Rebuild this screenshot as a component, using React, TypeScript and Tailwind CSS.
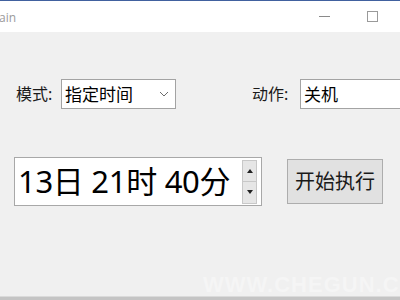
import React from "react";

const cjk = { fontFamily: '"Segoe UI", "Noto Sans", "Noto Sans CJK SC", sans-serif' };

export default function App() {
  return (
    <div className="w-[400px] h-[300px] bg-[#f0f0f0] flex flex-col overflow-hidden relative" style={cjk}>
      {/* title bar */}
      <div className="h-[32px] bg-white border-t border-[#41619f] flex items-center shrink-0">
        <span className="text-[12px] text-[#9a9a9a] ml-[-1px] mt-[2px]" style={{ fontFamily: '"Open Sans", sans-serif' }}>ain</span>
        <div className="ml-auto flex items-center">
          <div className="w-[11px] h-px bg-[#8a8a8a] mr-[37px]" />
          <div className="w-[11px] h-[11px] border border-[#9a9a9a] mr-[22px]" />
        </div>
      </div>
      {/* content */}
      <div className="flex-1 flex flex-col relative">
        <div className="flex items-center mt-[47px] h-[30px]">
          <span className="ml-[16px] text-[16px] text-[#1a1a1a] w-[45px]">模式:</span>
          <div className="w-[115px] h-[30px] bg-white border border-[#a3a3a3] flex items-center pl-[3px] pr-[6px]">
            <span className="text-[17px] text-black leading-none">指定时间</span>
            <svg className="ml-auto" width="10" height="6" viewBox="0 0 10 6">
              <path d="M1 1 L5 5 L9 1" stroke="#6b6b6b" strokeWidth="1" fill="none" />
            </svg>
          </div>
          <span className="ml-[76px] text-[16px] text-[#1a1a1a] w-[48px]">动作:</span>
          <div className="flex-1 h-[30px] bg-white border border-[#a3a3a3] border-r-0 flex items-center pl-[3px]">
            <span className="text-[17px] text-black leading-none">关机</span>
          </div>
        </div>
        <div className="flex items-center mt-[48px]">
          <div className="ml-[14px] w-[248px] h-[49px] bg-white border border-[#a8a8a8] flex items-center">
            <span className="ml-[3px] text-[31px] text-black leading-none tracking-[-0.3px]">13日 21时 40分</span>
            <div className="ml-auto mr-[4px] flex flex-col w-[15px] h-[44px]">
              <div className="flex-1 bg-[#e6e6e6] border border-[#c8c8c8] flex items-center justify-center">
                <svg width="6" height="4" viewBox="0 0 6 4"><path d="M0 4 L3 0 L6 4 Z" fill="#222" /></svg>
              </div>
              <div className="flex-1 bg-[#e6e6e6] border border-t-0 border-[#c8c8c8] flex items-center justify-center">
                <svg width="6" height="4" viewBox="0 0 6 4"><path d="M0 0 L3 4 L6 0 Z" fill="#222" /></svg>
              </div>
            </div>
          </div>
          <div className="ml-[25px] w-[96px] h-[45px] bg-[#e1e1e1] border border-[#adadad] flex items-center justify-center">
            <span className="text-[20px] text-[#1a1a1a]">开始执行</span>
          </div>
        </div>
        <div className="absolute left-[203px] top-[236px] text-[22px] font-bold text-[#f5f5f5] tracking-[1px] whitespace-nowrap" style={{ fontFamily: '"Liberation Sans", sans-serif' }}>
          WWW.CHEGUN.COM
        </div>
        <div className="mt-auto h-[4px] border-t border-[#dadada] bg-[#c4c4c4]" />
      </div>
    </div>
  );
}
